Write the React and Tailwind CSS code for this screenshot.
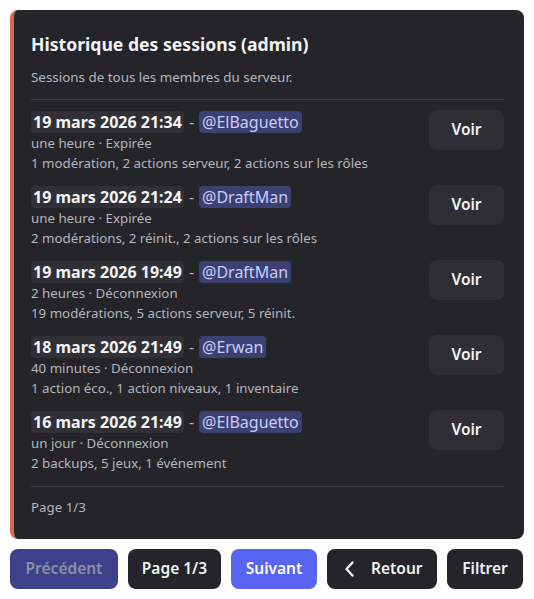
import React from "react";

const rows = [
  { date: "19 mars 2026 21:34", user: "@ElBaguetto", meta: "une heure · Expirée", detail: "1 modération, 2 actions serveur, 2 actions sur les rôles" },
  { date: "19 mars 2026 21:24", user: "@DraftMan", meta: "une heure · Expirée", detail: "2 modérations, 2 réinit., 2 actions sur les rôles" },
  { date: "19 mars 2026 19:49", user: "@DraftMan", meta: "2 heures · Déconnexion", detail: "19 modérations, 5 actions serveur, 5 réinit." },
  { date: "18 mars 2026 21:49", user: "@Erwan", meta: "40 minutes · Déconnexion", detail: "1 action éco., 1 action niveaux, 1 inventaire" },
  { date: "16 mars 2026 21:49", user: "@ElBaguetto", meta: "un jour · Déconnexion", detail: "2 backups, 5 jeux, 1 événement" },
];

export default function App() {
  return (
    <div className="min-h-screen bg-white p-[10px]" style={{ fontFamily: '"Noto Sans", "Open Sans", sans-serif' }}>
      <div className="flex w-[514px] rounded-lg bg-[#242429] border-l-4 border-[#d5694b] pl-[17px] pr-5 pt-[23px] pb-[22px] flex-col">
        <div className="text-[17.6px] font-bold text-[#f2f3f5] leading-[22px]">Historique des sessions (admin)</div>
        <div className="mt-[12px] text-[13.4px] text-[#b5b5bd] leading-[20px]">Sessions de tous les membres du serveur.</div>
        <div className="mt-[12px] h-px bg-[#3b3b42]" />
        <div className="flex flex-col gap-[13px] mt-[11px]">
          {rows.map((r, i) => (
            <div key={i} className="flex items-start justify-between">
              <div className="flex flex-col">
                <div className="flex items-center h-[22px] leading-[22px]">
                  <span className="rounded-[4px] bg-[#303036] px-[2px] text-[16px] font-bold text-[#f2f3f5]">{r.date}</span>
                  <span className="mx-[5px] text-[16px] text-[#b5b5bd]">-</span>
                  <span className="rounded-[4px] bg-[#3c4173] px-[3px] text-[16px] text-[#c9cdfb]">{r.user}</span>
                </div>
                <div className="text-[13.3px] text-[#b5b5bd] leading-[20px]">{r.meta}</div>
                <div className="text-[13.3px] text-[#b5b5bd] leading-[20px]">{r.detail}</div>
              </div>
              <button className="w-[75px] h-[40px] rounded-lg bg-[#2e2e34] text-[15.5px] font-semibold text-[#f2f3f5] -mt-px">Voir</button>
            </div>
          ))}
        </div>
        <div className="mt-[13px] h-px bg-[#3b3b42]" />
        <div className="mt-[10px] text-[13.3px] text-[#b5b5bd] leading-[20px]">Page 1/3</div>
      </div>
      <div className="flex gap-[10px] mt-[10px]">
        <button className="h-[40px] w-[108px] rounded-lg bg-[#3c4189] text-[15.5px] font-semibold text-[#8d90a6]">Précédent</button>
        <button className="h-[40px] w-[93px] rounded-lg bg-[#24242a] text-[15.5px] font-semibold text-[#f2f3f5]">Page 1/3</button>
        <button className="h-[40px] w-[86px] rounded-lg bg-[#5865f2] text-[15.5px] font-semibold text-white">Suivant</button>
        <button className="h-[40px] w-[110px] rounded-lg bg-[#24242a] text-[15.5px] font-semibold text-[#f2f3f5] flex items-center pl-[18px] gap-[17px]">
          <svg width="9" height="16" viewBox="0 0 9 16" fill="none"><path d="M7.5 1.5 L1.5 8 L7.5 14.5" stroke="#f2f3f5" strokeWidth="2.4" strokeLinecap="round" strokeLinejoin="round" /></svg>
          Retour
        </button>
        <button className="h-[40px] w-[76px] rounded-lg bg-[#24242a] text-[15.5px] font-semibold text-[#f2f3f5]">Filtrer</button>
      </div>
    </div>
  );
}
